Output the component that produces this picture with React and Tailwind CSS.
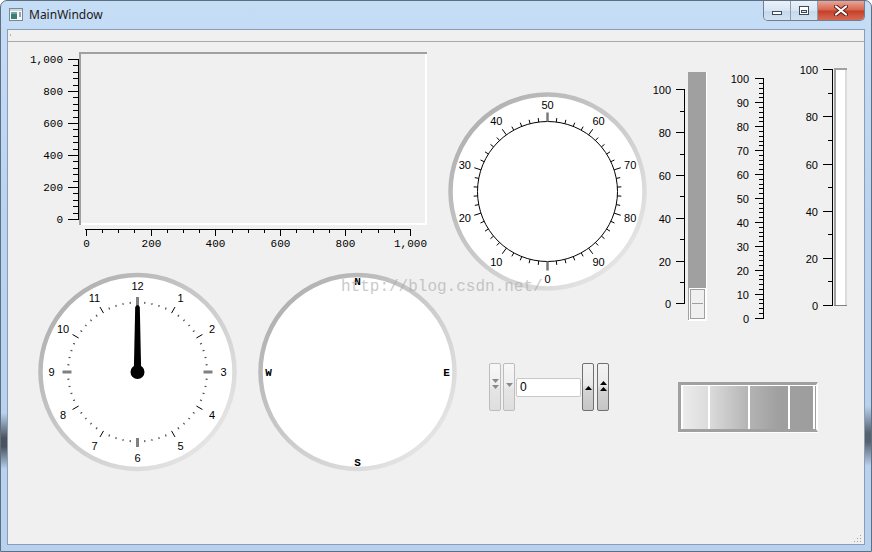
import React from "react";

const MONO = '"Liberation Mono", "DejaVu Sans Mono", monospace';
const SANS = '"Liberation Sans", Arial, sans-serif';

// degrees clockwise from 12 o'clock
function pt(cx, cy, r, deg) {
  const a = (deg * Math.PI) / 180;
  return [cx + r * Math.sin(a), cy - r * Math.cos(a)];
}

function Ring({ id, cx, cy }) {
  return (
    <>
      <defs>
        <linearGradient id={id} x1="0" y1="0" x2="1" y2="1">
          <stop offset="0" stopColor="#a9a9a9" />
          <stop offset="1" stopColor="#ededed" />
        </linearGradient>
      </defs>
      <circle cx={cx} cy={cy} r={97} fill="#ffffff" stroke={`url(#${id})`} strokeWidth={4.5} />
    </>
  );
}

function Plot() {
  const items = [];
  for (let v = 0; v <= 1000; v += 40) {
    const y = Math.round(219 - v * 0.16) + 0.5;
    const major = v % 200 === 0;
    items.push(<line key={"y" + v} x1={major ? 68 : 73} x2={78} y1={y} y2={y} stroke="#000" />);
    if (major)
      items.push(
        <text key={"yl" + v} x={63} y={y} textAnchor="end" dominantBaseline="central" fontFamily={MONO} fontSize={11}>
          {v.toLocaleString("en-US")}
        </text>
      );
  }
  for (let v = 0; v <= 1000; v += 50) {
    const x = Math.round(85.7 + v * 0.3243) + 0.5;
    const major = v % 200 === 0;
    items.push(<line key={"x" + v} x1={x} x2={x} y1={229} y2={major ? 236 : 233} stroke="#000" />);
    if (major)
      items.push(
        <text key={"xl" + v} x={x} y={244} textAnchor="middle" dominantBaseline="central" fontFamily={MONO} fontSize={11}>
          {v.toLocaleString("en-US")}
        </text>
      );
  }
  return (
    <svg width={432} height={224} viewBox="8 42 432 224" shapeRendering="crispEdges" className="overflow-visible shrink-0">
      <rect x={79} y={52} width={348} height={173} fill="#f0f0f0" />
      <rect x={79} y={52} width={348} height={2} fill="#a0a0a0" />
      <rect x={79} y={52} width={2} height={173} fill="#a0a0a0" />
      <rect x={425} y={54} width={2} height={171} fill="#ffffff" />
      <rect x={81} y={223} width={346} height={2} fill="#ffffff" />
      <line x1={78.5} x2={78.5} y1={59} y2={220} stroke="#000" />
      <line x1={85} x2={411} y1={229.5} y2={229.5} stroke="#000" />
      {items}
    </svg>
  );
}

function Dial() {
  const cx = 547.5;
  const cy = 191.5;
  const ticks = [];
  for (let v = 0; v < 100; v += 2) {
    const deg = 180 + v * 3.6;
    const major = v % 10 === 0;
    const strong = v === 0 || v === 50;
    const [x1, y1] = pt(cx, cy, 70, deg);
    const [x2, y2] = pt(cx, cy, strong ? 79 : major ? 77 : 74, deg);
    ticks.push(
      <line key={v} x1={x1} y1={y1} x2={x2} y2={y2} stroke={strong ? "#7a7a7a" : "#000"} strokeWidth={strong ? 2.5 : 1} />
    );
    if (major) {
      const [lx, ly] = pt(cx, cy, 87, deg);
      ticks.push(
        <text key={"l" + v} x={lx} y={ly} textAnchor="middle" dominantBaseline="central" fontFamily={SANS} fontSize={11}>
          {v}
        </text>
      );
    }
  }
  return (
    <svg width={215} height={224} viewBox="440 42 215 224" className="overflow-visible shrink-0">
      <Ring id="ringDial" cx={cx} cy={cy} />
      <circle cx={cx} cy={cy} r={70} fill="none" stroke="#000" strokeWidth={1} />
      {ticks}
    </svg>
  );
}

function SliderA() {
  const items = [];
  for (let v = 0; v <= 100; v += 10) {
    const y = Math.round(303.3 - v * 2.14) + 0.5;
    const major = v % 20 === 0;
    items.push(<line key={v} x1={major ? 676 : 680} x2={684} y1={y} y2={y} stroke="#000" />);
    if (major)
      items.push(
        <text key={"l" + v} x={671} y={y} textAnchor="end" dominantBaseline="central" fontFamily={SANS} fontSize={11}>
          {v}
        </text>
      );
  }
  return (
    <svg width={65} height={224} viewBox="655 42 65 224" shapeRendering="crispEdges" className="overflow-visible shrink-0">
      <line x1={684.5} x2={684.5} y1={89} y2={304} stroke="#000" />
      {items}
      <rect x={688} y={72} width={19} height={249} fill="#a0a0a0" />
      <rect x={706} y={72} width={1} height={249} fill="#ffffff" />
      <rect x={688} y={320} width={19} height={1} fill="#ffffff" />
      <rect x={689} y={288} width={17} height={32} fill="#ffffff" />
      <rect x={690.5} y={289.5} width={14} height={29} fill="#f0f0f0" stroke="#a0a0a0" />
      <line x1={692} x2={703} y1={303.5} y2={303.5} stroke="#a0a0a0" />
    </svg>
  );
}

function SliderB() {
  const items = [];
  for (let v = 0; v <= 100; v += 2) {
    const y = Math.round(317.7 - v * 2.394) + 0.5;
    const major = v % 10 === 0;
    items.push(<line key={v} x1={major ? 755 : 759} x2={763} y1={y} y2={y} stroke="#000" />);
    if (major)
      items.push(
        <text key={"l" + v} x={749} y={y} textAnchor="end" dominantBaseline="central" fontFamily={SANS} fontSize={11}>
          {v}
        </text>
      );
  }
  return (
    <svg width={70} height={224} viewBox="720 42 70 224" shapeRendering="crispEdges" className="overflow-visible shrink-0">
      <line x1={763.5} x2={763.5} y1={78} y2={318.5} stroke="#000" />
      {items}
    </svg>
  );
}

function SliderC() {
  const items = [];
  for (let v = 0; v <= 100; v += 10) {
    const y = Math.round(305 - v * 2.357) + 0.5;
    const major = v % 20 === 0;
    items.push(<line key={v} x1={major ? 823 : 828} x2={832} y1={y} y2={y} stroke="#000" />);
    if (major)
      items.push(
        <text key={"l" + v} x={818} y={y} textAnchor="end" dominantBaseline="central" fontFamily={SANS} fontSize={11}>
          {v}
        </text>
      );
  }
  return (
    <svg width={74} height={224} viewBox="790 42 74 224" shapeRendering="crispEdges" className="overflow-visible shrink-0">
      <line x1={832.5} x2={832.5} y1={69} y2={306} stroke="#000" />
      {items}
      <rect x={834} y={68} width={13} height={238} fill="#ffffff" />
      <rect x={834} y={68} width={2} height={238} fill="#a0a0a0" />
      <rect x={834} y={68} width={13} height={2} fill="#a0a0a0" />
      <rect x={845} y={70} width={2} height={236} fill="#dcdcdc" />
      <rect x={834} y={305} width={13} height={1} fill="#808080" />
    </svg>
  );
}

function Clock() {
  const cx = 137.5;
  const cy = 372;
  const items = [];
  for (let m = 0; m < 60; m++) {
    const deg = m * 6;
    let r1 = 68.5;
    let r2 = 70.5;
    let stroke = "#505050";
    let w = 1.2;
    if (m % 15 === 0) {
      r1 = 66;
      r2 = 75;
      stroke = "#808080";
      w = 3;
    } else if (m % 5 === 0) {
      r1 = 68;
      r2 = 75;
      stroke = "#000";
      w = 1;
    }
    const [x1, y1] = pt(cx, cy, r1, deg);
    const [x2, y2] = pt(cx, cy, r2, deg);
    items.push(<line key={m} x1={x1} y1={y1} x2={x2} y2={y2} stroke={stroke} strokeWidth={w} />);
  }
  for (let h = 1; h <= 12; h++) {
    const [x, y] = pt(cx, cy, 86, h * 30);
    items.push(
      <text key={"h" + h} x={x} y={y} textAnchor="middle" dominantBaseline="central" fontFamily={SANS} fontSize={11}>
        {h}
      </text>
    );
  }
  return (
    <svg width={242} height={278} viewBox="8 266 242 278" className="overflow-visible shrink-0">
      <Ring id="ringClock" cx={cx} cy={cy} />
      {items}
      <path d="M133.8 372 L135.2 307 Q137.5 303 139.8 307 L141.2 372 Z" fill="#000" />
      <circle cx={cx} cy={cy} r={7} fill="#000" />
    </svg>
  );
}

function Compass() {
  const cx = 357.5;
  const cy = 372;
  const lab = (x, y, t) => (
    <text x={x} y={y} textAnchor="middle" dominantBaseline="central" fontFamily={MONO} fontWeight="bold" fontSize={11}>
      {t}
    </text>
  );
  return (
    <svg width={220} height={278} viewBox="250 266 220 278" className="overflow-visible shrink-0">
      <Ring id="ringCompass" cx={cx} cy={cy} />
      {lab(357.5, 282, "N")}
      {lab(446.5, 373, "E")}
      {lab(357.5, 463, "S")}
      {lab(268.5, 373, "W")}
    </svg>
  );
}

function Arrow({ up, color, double }) {
  const tri = (y) => (up ? `0,${y + 4} 7,${y + 4} 3.5,${y}` : `0,${y} 7,${y} 3.5,${y + 4}`);
  return (
    <svg width={7} height={double ? 10 : 4} viewBox={`0 0 7 ${double ? 10 : 4}`}>
      <polygon points={tri(0)} fill={color} />
      {double && <polygon points={tri(6)} fill={color} />}
    </svg>
  );
}

function SpinBox() {
  const light =
    "w-[12px] h-[48px] rounded-[2px] border border-[#bdbdbd] bg-[linear-gradient(#f7f7f7,#efefef_45%,#e5e5e5_55%,#dedede)] flex items-center justify-center";
  const dark =
    "w-[12px] h-[48px] rounded-[2px] border border-[#707070] bg-[linear-gradient(#f3f3f3,#e9e9e9_45%,#d4d4d4_55%,#c5c5c5)] flex items-center justify-center";
  return (
    <div className="flex items-center">
      <div className={light + " pb-[6px]"}>
        <Arrow color="#8a8a8a" double />
      </div>
      <div className={light + " ml-[2px] pb-[4px]"}>
        <Arrow color="#8a8a8a" />
      </div>
      <div className="ml-[1px] w-[65px] h-[19px] rounded-[2px] border border-[#c8c8c8] bg-white pl-[3px] text-[12px] leading-[17px] text-black font-['Liberation_Sans',sans-serif]">
        0
      </div>
      <div className={dark + " ml-[1px] pt-[1px]"}>
        <Arrow up color="#000" />
      </div>
      <div className={dark + " ml-[3px] pb-[2px]"}>
        <Arrow up color="#000" double />
      </div>
    </div>
  );
}

function Wheel() {
  return (
    <div className="w-[140px] h-[50px] border-t-[3px] border-l-[3px] border-b-[3px] border-r-2 border-t-[#a0a0a0] border-l-[#a0a0a0] border-b-[#a0a0a0] border-r-white shadow-[0_1px_0_#ffffff]">
      <div className="flex h-full border-t border-white bg-[linear-gradient(to_right,#ededed,#dadada_22%,#b4b4b4_50%,#a0a0a0_72%,#9d9d9d)]">
        <div className="w-[27px] border-l-2 border-white" />
        <div className="w-[40px] border-l-2 border-white" />
        <div className="w-[40px] border-l-2 border-white" />
        <div className="w-[25px] border-l-2 border-white" />
        <div className="w-[3px] border-l-2 border-white" />
      </div>
    </div>
  );
}

function TitleIcon() {
  return (
    <svg width={14} height={13} viewBox="0 0 14 13">
      <rect x={0.5} y={0.5} width={13} height={12} fill="#f5f7f9" stroke="#7b8696" />
      <rect x={1} y={1} width={12} height={2} fill="#c9d6e4" />
      <rect x={2} y={4} width={6} height={7} fill="#3c7d74" />
      <rect x={2} y={4} width={6} height={2} fill="#6fa7a0" />
      <rect x={10.5} y={4} width={1} height={5} fill="#4a4a4a" />
    </svg>
  );
}

function WinButtons() {
  return (
    <div className="flex h-[20px] mr-[6px] rounded-b-[5px] border border-t-0 border-[#6e7f94] overflow-hidden">
      <div className="w-[27px] h-full bg-[linear-gradient(#eaf1f9,#d8e5f3_50%,#c5d7ec_51%,#d3e2f2)] flex items-center justify-center border-r border-[#8d9cb0]">
        <div className="w-[10px] h-[4px] mt-[5px] bg-white border border-[#3f4a58]" />
      </div>
      <div className="w-[27px] h-full bg-[linear-gradient(#eaf1f9,#d8e5f3_50%,#c5d7ec_51%,#d3e2f2)] flex items-center justify-center border-r border-[#8d9cb0]">
        <div className="w-[10px] h-[9px] border border-[#3f4a58] bg-white flex items-center justify-center">
          <div className="w-[6px] h-[3px] mt-[1px] border border-[#3f4a58] bg-[#dfe8f2]" />
        </div>
      </div>
      <div className="w-[46px] h-full bg-[linear-gradient(#e9a597,#d5644c_48%,#c33f29_52%,#d86a52)] flex items-center justify-center">
        <svg width={14} height={11} viewBox="0 0 14 11">
          <path d="M2 1.5 L12 9.5 M12 1.5 L2 9.5" stroke="#5a1d14" strokeWidth={4} strokeLinecap="round" />
          <path d="M2 1.5 L12 9.5 M12 1.5 L2 9.5" stroke="#ffffff" strokeWidth={2.2} strokeLinecap="round" />
        </svg>
      </div>
    </div>
  );
}

export default function App() {
  return (
    <div className="relative w-[872px] h-[552px] overflow-hidden flex flex-col border border-[#5f6f82] rounded-t-[7px] bg-[linear-gradient(180deg,#c6ddf6,#b9d3f0_40%,#b8d1ee)]">
      {/* title bar */}
      <div className="h-[28px] flex justify-between">
        <div className="flex items-start pl-[8px] pt-[7px]">
          <TitleIcon />
          <span className="ml-[6px] mt-[-1px] text-[12px] leading-[15px] text-[#1a1a1a] font-['Noto_Sans','Open_Sans',sans-serif]">
            MainWindow
          </span>
        </div>
        <WinButtons />
      </div>

      {/* client area */}
      <div className="relative flex-1 mx-[6px] mb-[6px] border border-[#8a9db5] bg-[#f0f0f0] flex flex-col">
        <div className="h-[12px] border-b border-[#a8a8a8] bg-[#f0f0f0] relative">
          <div className="absolute left-[2px] top-[4px] w-[1px] h-[2px] bg-[#b0b0b0]" />
        </div>

        <div className="h-[224px] flex">
          <Plot />
          <Dial />
          <SliderA />
          <SliderB />
          <SliderC />
        </div>

        <div className="flex-1 flex">
          <Clock />
          <Compass />
          <div className="w-[170px] shrink-0 pl-[19px] pt-[97px]">
            <SpinBox />
          </div>
          <div className="w-[224px] shrink-0 pl-[38px] pt-[116px]">
            <Wheel />
          </div>
        </div>

        {/* size grip */}
        <svg className="absolute right-[2px] bottom-[1px]" width={8} height={8} viewBox="0 0 8 8">
          <rect x={6} y={0} width={1} height={1} fill="#a0a0a0" />
          <rect x={3} y={3} width={1} height={1} fill="#a0a0a0" />
          <rect x={6} y={3} width={1} height={1} fill="#a0a0a0" />
          <rect x={0} y={6} width={1} height={1} fill="#a0a0a0" />
          <rect x={3} y={6} width={1} height={1} fill="#a0a0a0" />
          <rect x={6} y={6} width={1} height={1} fill="#a0a0a0" />
        </svg>
      </div>

      {/* watermark over the widgets */}
      <div className="absolute left-[340px] top-[278px] text-[16px] leading-none text-[#a8a8a8] opacity-60 font-['Liberation_Mono',monospace] pointer-events-none">
        http://blog.csdn.net/
      </div>

      {/* dark streaks seen through the glass frame */}
      <div className="absolute left-0 top-[412px] w-[6px] h-[56px] bg-[linear-gradient(transparent,#2e3238_45%,#2e3238_60%,transparent)] opacity-80" />
      <div className="absolute right-0 top-[405px] w-[6px] h-[60px] bg-[linear-gradient(transparent,#2e3238_45%,#2e3238_60%,transparent)] opacity-70" />
    </div>
  );
}
